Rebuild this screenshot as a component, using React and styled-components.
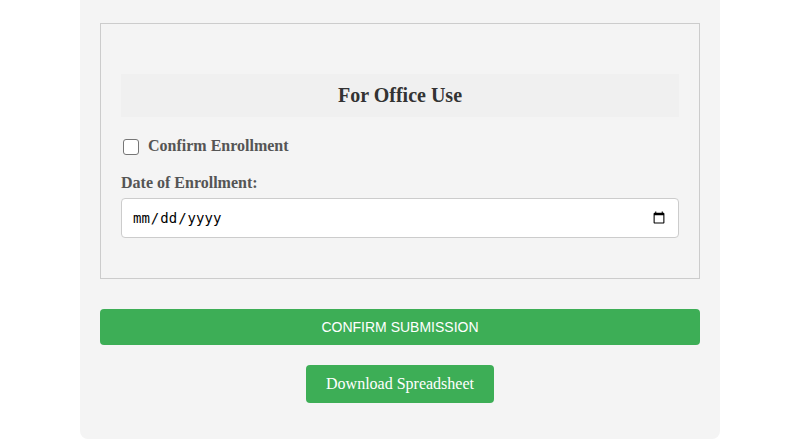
import React from "react";
import styled, { createGlobalStyle } from "styled-components";

const Global = createGlobalStyle`
  html, body { margin: 0; padding: 0; background: #ffffff; }
  body { font-family: "Liberation Serif", "Times New Roman", serif; }
`;

const Container = styled.div`
  width: 600px;
  margin: 0 0 0 80px;
  background: #f4f4f4;
  padding: 23px 20px 36px;
  border-radius: 0 0 8px 8px;
  display: flex;
  flex-direction: column;
  align-items: stretch;
`;

const Fieldset = styled.fieldset`
  margin: 0;
  border: 1px solid #cccccc;
  padding: 50px 20px 40px;
  display: flex;
  flex-direction: column;
  min-width: 0;
`;

const Heading = styled.h3`
  margin: 0 0 20px;
  background: #f0f0f0;
  padding: 9px 0 10px;
  text-align: center;
  font-size: 20px;
  font-weight: bold;
  color: #333333;
  line-height: 24px;
`;

const CheckRow = styled.label`
  display: flex;
  align-items: center;
  gap: 9px;
  font-size: 16px;
  font-weight: bold;
  color: #555555;
  margin-bottom: 19px;
  padding-left: 2px;
`;

const Checkbox = styled.input`
  width: 16px;
  height: 16px;
  margin: 2px 0 0;
  appearance: none;
  border: 1.5px solid #767676;
  border-radius: 3px;
  background: #fff;
`;

const FieldLabel = styled.label`
  font-size: 16px;
  font-weight: bold;
  color: #555555;
  margin-bottom: 6px;
  line-height: 18px;
`;

const DateInput = styled.input`
  box-sizing: border-box;
  width: 100%;
  height: 40px;
  padding: 0 10px;
  border: 1px solid #cccccc;
  border-radius: 4px;
  background: #ffffff;
  font-family: "DejaVu Sans Mono", monospace;
  font-size: 14px;
  color: #000;
`;

const ConfirmButton = styled.button`
  margin-top: 30px;
  height: 36px;
  border: none;
  border-radius: 4px;
  background: #3dae56;
  color: #ffffff;
  font-family: "Liberation Sans", Arial, sans-serif;
  font-size: 14px;
  text-transform: uppercase;
  cursor: pointer;
`;

const DownloadButton = styled.button`
  align-self: center;
  margin-top: 20px;
  height: 38px;
  padding: 0 20px;
  border: none;
  border-radius: 4px;
  background: #3dae56;
  color: #ffffff;
  font-family: "Liberation Serif", "Times New Roman", serif;
  font-size: 16px;
  cursor: pointer;
`;

export default function App() {
  return (
    <>
      <Global />
      <Container>
        <Fieldset>
          <Heading>For Office Use</Heading>
          <CheckRow>
            <Checkbox type="checkbox" />
            Confirm Enrollment
          </CheckRow>
          <FieldLabel htmlFor="enroll-date">Date of Enrollment:</FieldLabel>
          <DateInput id="enroll-date" type="date" />
        </Fieldset>
        <ConfirmButton>Confirm Submission</ConfirmButton>
        <DownloadButton>Download Spreadsheet</DownloadButton>
      </Container>
    </>
  );
}
